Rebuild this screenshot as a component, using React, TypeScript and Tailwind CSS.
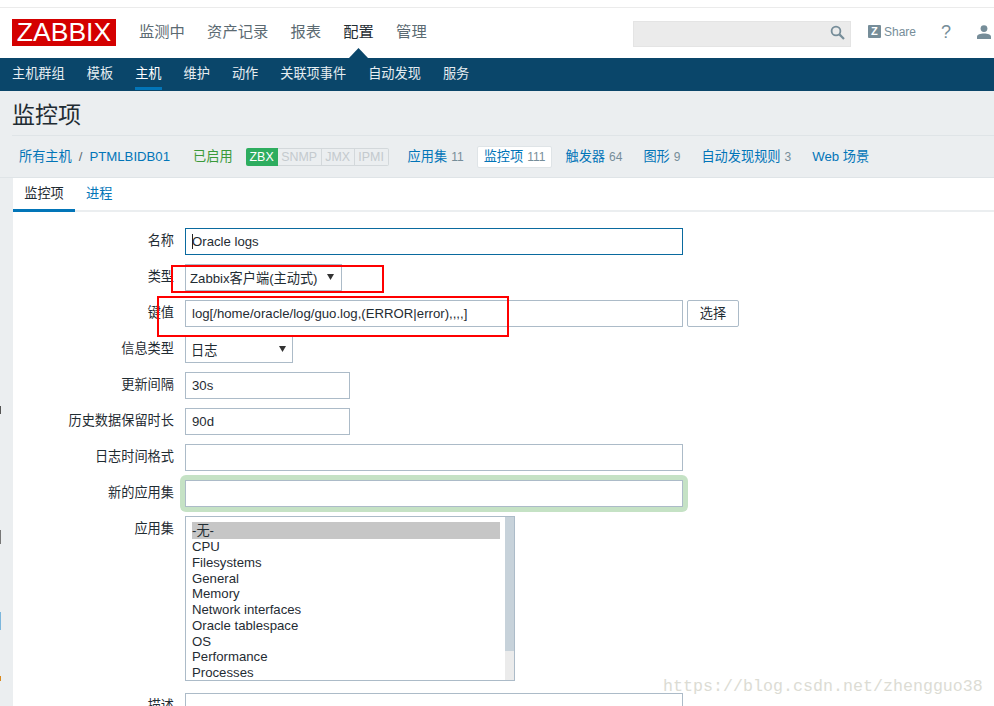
const FONT = "font-['Liberation_Sans','Noto_Sans_CJK_SC',sans-serif]";

function Row({ label, children }: { label: string; children: React.ReactNode }) {
  return (
    <div className="flex items-start">
      <div className="w-[161px] shrink-0 pt-px text-right text-[13.2px] leading-[24px] text-[#1f2c33]">{label}</div>
      <div className="ml-[11px] flex items-start">{children}</div>
    </div>
  );
}

function Field({ w, value, cls = "border-[#acbbc8]" }: { w: string; value?: string; cls?: string }) {
  return <div className={`${w} ${cls} h-[27px] border border-solid bg-white px-[6px] text-[13.2px] leading-[26px] text-[#1f2c33] whitespace-nowrap overflow-hidden`}>{value}</div>;
}

function Arrow() {
  return <svg width="7" height="6" viewBox="0 0 7 6" className="block"><path d="M0 0h7L3.5 6z" fill="#333" /></svg>;
}

const menu = ["监测中", "资产记录", "报表", "配置", "管理"];
const nav = ["主机群组", "模板", "主机", "维护", "动作", "关联项事件", "自动发现", "服务"];
const apps = ["CPU", "Filesystems", "General", "Memory", "Network interfaces", "Oracle tablespace", "OS", "Performance", "Processes"];

function Link({ t, n, active }: { t: string; n?: string; active?: boolean }) {
  return (
    <div className={active ? "h-[22px] rounded-[2px] border border-[#dfe4e7] bg-white px-[6px] leading-[20px]" : "leading-[22px]"}>
      <span className="text-[#0275b8]">{t}</span>
      {n && <span className="ml-[4px] text-[12px] text-[#768d99]">{n}</span>}
    </div>
  );
}

export default function App() {
  return (
    <div className={`${FONT} relative h-[706px] w-[994px] overflow-hidden bg-[#ebeef0]`}>
      <div className="h-[7px] bg-white" />
      <div className="h-px bg-[#ebebeb]" />
      {/* top header */}
      <header className="relative flex h-[50px] items-start bg-white pl-[12px]">
        <div className="mt-[11px] flex h-[27px] w-[104px] items-center justify-center bg-[#d40000] text-[26.5px] leading-none text-white">ZABBIX</div>
        <nav className="ml-[23px] mt-[14px] flex gap-[22.2px] text-[15.3px] leading-[20px] text-[#5b6a72]">
          {menu.map((m) => (
            <span key={m} className={m === "配置" ? "text-[#1f2c33]" : ""}>{m}</span>
          ))}
        </nav>
        <div className="ml-auto mt-[13px] flex h-[26px] w-[218px] items-start justify-end border border-[#e4e4e4] bg-[#ebebeb] pr-[5px] pt-[3px]">
          <svg width="15" height="15" viewBox="0 0 15 15" fill="none" stroke="#768d99" strokeWidth="1.8"><circle cx="6" cy="6" r="4.4" /><path d="M9.4 9.4L14 14" strokeWidth="2.2" /></svg>
        </div>
        <div className="ml-[17px] mt-[17px] flex h-[13px] items-center">
          <span className="flex h-[13px] w-[13px] items-center justify-center rounded-[1px] bg-[#768d99] text-[11px] font-bold leading-none text-white">Z</span>
          <span className="ml-[3px] text-[12px] text-[#768d99]">Share</span>
        </div>
        <span className="ml-[25px] mt-[14px] text-[18px] leading-[20px] text-[#768d99]">?</span>
        <svg className="ml-[26px] mr-[3px] mt-[17px]" width="14" height="14" viewBox="0 0 14 14" fill="#768d99"><circle cx="7" cy="3.6" r="3.4" /><path d="M0 14v-2.4C0 9.6 3.4 8.4 7 8.4s7 1.2 7 3.2V14z" /></svg>
        <svg className="absolute left-[349px] top-[40px]" width="19" height="10" viewBox="0 0 19 10"><path d="M0 10L9.5 0 19 10z" fill="#0a466a" /></svg>
      </header>
      {/* main nav */}
      <nav className="flex h-[33px] gap-[22px] bg-[#0a466a] pl-[12px] text-[13.2px] leading-[31px] text-[#e6edf1]">
        {nav.map((n) => (
          <span key={n} className={n === "主机" ? "h-[32px] border-b-[3px] border-[#0275b8] text-white" : ""}>{n}</span>
        ))}
      </nav>
      {/* title */}
      <div className="ml-[12px] h-[45px] border-b border-[#dfe4e7] text-[23px] leading-[48px] text-[#1f2c33]">监控项</div>
      {/* host breadcrumb row */}
      <div className="flex h-[42px] items-center border-b border-[#dfe4e7] pl-[19px] text-[13.2px]">
        <span className="text-[#0275b8]">所有主机</span>
        <span className="ml-[7px] text-[#5b6a72]">/</span>
        <span className="ml-[7px] text-[#0275b8]">PTMLBIDB01</span>
        <span className="ml-[23px] text-[#3a9a3a]">已启用</span>
        <div className="ml-[13px] flex h-[18px] text-[12.4px] leading-[18px]">
          <span className="w-[32px] rounded-l-[2px] bg-[#2ead5f] text-center text-white">ZBX</span>
          <span className="w-[44px] border-y border-r border-[#d3d8db] text-center leading-[16px] text-[#c4cace]">SNMP</span>
          <span className="w-[33px] border-y border-r border-[#d3d8db] text-center leading-[16px] text-[#c4cace]">JMX</span>
          <span className="w-[34px] rounded-r-[2px] border-y border-r border-[#d3d8db] text-center leading-[16px] text-[#c4cace]">IPMI</span>
        </div>
        <div className="ml-[19px] flex items-center gap-[13px]">
          <Link t="应用集" n="11" />
          <Link t="监控项" n="111" active />
          <div className="flex gap-[21px]">
            <Link t="触发器" n="64" />
            <Link t="图形" n="9" />
            <Link t="自动发现规则" n="3" />
            <Link t="Web 场景" />
          </div>
        </div>
      </div>
      {/* content card */}
      <main className="ml-[13px] h-[530px] bg-white">
        <div className="flex h-[34px] border-b-2 border-[#ebeef0] text-[13.2px] leading-[32px]">
          <span className="h-[34px] w-[62px] border-b-[3px] border-[#0275b8] text-center text-[#1f2c33]">监控项</span>
          <span className="ml-[11px] text-[#0275b8]">进程</span>
        </div>
        <div className="flex flex-col gap-[9px] pt-[16px]">
          <Row label="名称">
            <div className="relative">
              <Field w="w-[498px]" value="Oracle logs" cls="border-[#0a6a9f]" />
              <span className="absolute left-[7px] top-[6px] h-[15px] w-px bg-[#222]" />
            </div>
          </Row>
          <Row label="类型">
            <div className="flex h-[27px] w-[157px] items-start justify-between border border-[#acbbc8] pl-[4px] pr-[7px] text-[13.2px] leading-[27px] text-[#1f2c33]">
              <span>Zabbix客户端(主动式)</span>
              <span className="mt-[9px]"><Arrow /></span>
            </div>
          </Row>
          <Row label="键值">
            <Field w="w-[498px]" value="log[/home/oracle/log/guo.log,(ERROR|error),,,,]" />
            <div className="ml-[4px] h-[27px] w-[52px] rounded-[2px] border border-[#acbbc8] bg-white text-center text-[13.2px] leading-[26px] text-[#1f2c33]">选择</div>
          </Row>
          <Row label="信息类型">
            <div className="flex h-[27px] w-[108px] items-start justify-between border border-[#acbbc8] pl-[5px] pr-[6px] text-[13.2px] leading-[27px] text-[#1f2c33]">
              <span>日志</span>
              <span className="mt-[9px]"><Arrow /></span>
            </div>
          </Row>
          <Row label="更新间隔"><Field w="w-[165px]" value="30s" /></Row>
          <Row label="历史数据保留时长"><Field w="w-[165px]" value="90d" /></Row>
          <Row label="日志时间格式"><Field w="w-[498px]" /></Row>
          <Row label="新的应用集">
            <div className="rounded-[2px] shadow-[0_0_0_5px_#c5e2c5]"><Field w="w-[498px]" /></div>
          </Row>
          <Row label="应用集">
            <div className="flex h-[165px] w-[330px] justify-between border border-[#acbbc8] bg-white pl-[6px]">
              <div className="w-[308px] overflow-hidden pt-[5px] text-[13.2px] leading-[15.75px] text-[#1f2c33]">
                <div className="h-[17px] bg-[#c6c6c6] leading-[18px]">-无-</div>
                {apps.map((a) => <div key={a} className="whitespace-nowrap">{a}</div>)}
              </div>
              <div className="flex w-[9px] flex-col bg-[#ebebeb]">
                <div className="h-[134px] bg-[#c7d2da]" />
              </div>
            </div>
          </Row>
          <div className="mt-[3px]">
            <Row label="描述"><Field w="w-[498px]" /></Row>
          </div>
        </div>
      </main>
      {/* annotations drawn over the screenshot */}
      <div className="absolute left-[171px] top-[265px] h-[28px] w-[213px] border-2 border-[#f00]" />
      <div className="absolute left-[157px] top-[296px] h-[41px] w-[352px] border-2 border-[#f00]" />
      {/* edge specks */}
      <div className="absolute left-0 top-[406px] h-[8px] w-px bg-[#555]" />
      <div className="absolute left-0 top-[530px] h-[14px] w-px bg-[#777]" />
      <div className="absolute left-0 top-[612px] h-[18px] w-px bg-[#7cb6dc]" />
      <div className="absolute left-0 top-[676px] h-[5px] w-px bg-[#d9881c]" />
      {/* watermark */}
      <div className="absolute left-[663px] top-[677px] font-['Liberation_Mono',monospace] text-[16.67px] leading-[20px] text-[#dcdcd4]">https://blog.csdn.net/zhengguo38</div>
    </div>
  );
}
